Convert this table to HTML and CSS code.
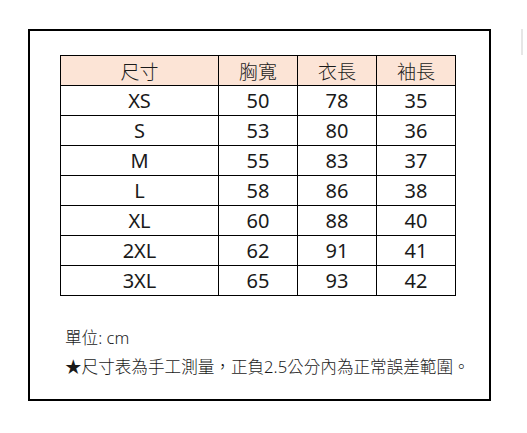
FILE: index.html
```html
<!DOCTYPE html>
<html lang="zh-Hant">
<head>
<meta charset="utf-8">
<title>尺寸表</title>
<link rel="stylesheet" href="styles.css">
</head>
<body>
<div class="page">
  <div class="card">
    <table class="size-table">
      <colgroup>
        <col class="c-size">
        <col class="c-num">
        <col class="c-num">
        <col class="c-num">
      </colgroup>
      <thead>
        <tr><th>尺寸</th><th>胸寬</th><th>衣長</th><th>袖長</th></tr>
      </thead>
      <tbody>
        <tr><td>XS</td><td>50</td><td>78</td><td>35</td></tr>
        <tr><td>S</td><td>53</td><td>80</td><td>36</td></tr>
        <tr><td>M</td><td>55</td><td>83</td><td>37</td></tr>
        <tr><td>L</td><td>58</td><td>86</td><td>38</td></tr>
        <tr><td>XL</td><td>60</td><td>88</td><td>40</td></tr>
        <tr><td>2XL</td><td>62</td><td>91</td><td>41</td></tr>
        <tr><td>3XL</td><td>65</td><td>93</td><td>42</td></tr>
      </tbody>
    </table>
    <div class="notes">
      <p class="note">單位: cm</p>
      <p class="note">★尺寸表為手工測量，正負2.5公分內為正常誤差範圍。</p>
    </div>
  </div>
  <div class="edge"></div>
</div>
</body>
</html>
```
FILE: styles.css
```css
html, body {
  margin: 0;
  padding: 0;
  background: #ffffff;
}
body {
  font-family: "Noto Sans", "Noto Sans CJK TC", sans-serif;
  color: #1a1a1a;
}
.page {
  display: flex;
  align-items: flex-start;
  padding: 29px 0 0 28px;
}
.card {
  width: 429px;
  height: 344px;
  border: 2px solid #000;
  padding: 24px 0 0 30px;
  box-sizing: content-box;
  flex: none;
}
.size-table {
  border-collapse: collapse;
  table-layout: fixed;
  width: 396px;
}
.c-size { width: 158px; }
.c-num { width: 79px; }
.size-table th,
.size-table td {
  border: 1px solid #000;
  height: 29px;
  padding: 0;
  text-align: center;
  vertical-align: middle;
  font-size: 20px;
  font-weight: 400;
  line-height: 29px;
}
.size-table th {
  background: #fce4d6;
  font-family: "Noto Sans CJK TC", sans-serif;
  font-size: 19px;
  font-weight: 300;
}
.notes {
  margin-top: 27px;
  padding-left: 5px;
}
.note {
  margin: 0;
  font-size: 16.6px;
  line-height: 29px;
  font-weight: 300;
  font-family: "Noto Sans", "Noto Sans CJK TC", sans-serif;
}
.edge {
  width: 2px;
  height: 26px;
  margin-left: 30px;
  background: #e6e6e6;
  flex: none;
}
```
